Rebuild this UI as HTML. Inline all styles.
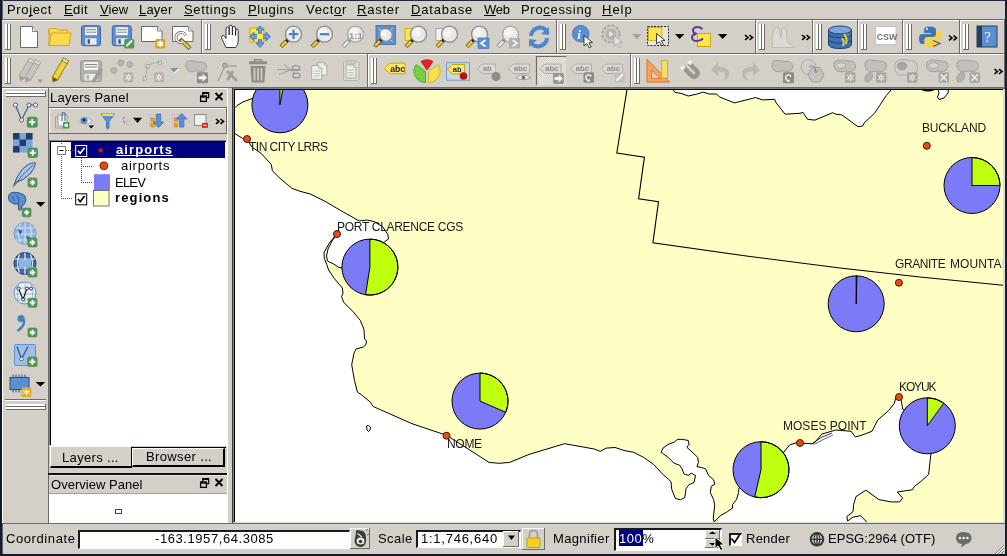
<!DOCTYPE html><html><head><meta charset="utf-8"><style>html,body{margin:0;padding:0;}body{width:1007px;height:556px;overflow:hidden;position:relative;background:#d4d0c8;font-family:"Liberation Sans", sans-serif;}div{box-sizing:border-box;} svg{display:block;overflow:hidden}u,span{text-decoration-skip-ink:none;}</style></head><body>
<svg style="position:absolute;left:235px;top:90px" width="768" height="432" viewBox="235 90 768 432"><rect x="230" y="85" width="780" height="445" fill="#fffec4"/><path d="M225.0,80.0 L266.0,80.0 L262.0,94.0 L252.0,98.5 L243.0,102.0 L237.0,105.5 L235.0,107.5 L225.0,112.0 Z" fill="#fff" stroke="#000" stroke-width="1" stroke-linejoin="round"/><path d="M225.0,133.6 L235.0,133.6 L242.4,138.3 L247.0,139.0 L251.7,147.0 L261.0,153.2 L271.3,164.6 L272.4,170.8 L279.6,178.0 L292.0,188.4 L300.0,191.3 L310.0,193.9 L325.2,201.4 L343.2,212.0 L350.8,216.2 L359.2,221.0 L366.8,220.0 L374.5,221.7 L382.8,227.0 L387.7,234.2 L388.5,239.0 L384.2,242.0 L370.0,255.0 L350.0,264.0 L342.0,268.0 L338.4,267.2 L333.0,263.5 L329.4,262.1 L327.5,261.0 L326.5,256.0 L328.0,249.0 L332.0,241.0 L337.0,234.0 L334.5,236.5 L329.0,243.5 L324.0,252.5 L324.3,258.5 L326.7,264.4 L328.6,270.0 L334.4,278.6 L342.3,288.0 L343.0,293.0 L341.6,296.6 L343.7,302.4 L353.1,311.7 L360.3,320.4 L363.9,329.0 L364.6,339.0 L366.5,341.0 L366.0,344.5 L363.2,347.0 L356.0,349.0 L354.0,353.2 L351.7,364.7 L354.5,380.6 L357.4,392.1 L361.7,395.0 L370.4,402.2 L373.2,406.5 L412.0,423.7 L446.6,435.3 L468.2,449.0 L489.0,462.4 L499.3,463.3 L509.7,462.4 L529.0,454.4 L564.6,443.7 L594.3,449.0 L600.2,451.4 L606.2,448.1 L615.0,447.5 L624.0,450.5 L633.6,452.3 L643.7,457.4 L653.8,464.6 L662.4,473.9 L668.2,479.0 L671.0,481.8 L671.8,489.7 L675.4,498.4 L680.4,499.8 L684.7,497.7 L686.2,488.3 L689.0,484.7 L694.0,482.6 L695.5,475.4 L691.2,473.2 L688.3,475.4 L684.0,473.9 L681.8,468.2 L679.7,465.3 L673.9,463.1 L668.2,457.4 L662.4,453.1 L661.0,452.3 L663.1,448.0 L668.2,444.4 L673.9,442.3 L677.5,439.4 L682.6,439.4 L688.3,440.5 L689.0,444.4 L686.9,447.3 L693.3,453.1 L697.7,457.4 L698.4,462.4 L697.0,466.7 L701.3,467.4 L705.6,468.9 L708.5,475.4 L713.7,479.9 L714.7,484.3 L711.3,486.3 L710.3,492.7 L713.7,499.7 L714.7,505.6 L713.2,518.5 L714.2,522.0 L714.2,535.0 L225.0,535.0 Z" fill="#fff" stroke="#000" stroke-width="1" stroke-linejoin="round"/><path d="M714.2,522.0 L720.7,515.5 L727.6,511.5 L732.5,508.1 L732.5,504.6 L736.5,499.7 L738.5,492.7 L739.0,487.8 L761.0,470.0 L784.0,452.0 L789.6,445.0 L796.3,442.7 L800.0,443.0 L813.5,443.9 L821.8,434.1 L835.8,430.0 L851.1,431.3 L855.3,436.9 L860.9,435.5 L872.0,431.3 L877.6,420.2 L888.8,410.4 L894.3,403.5 L895.7,397.9 L899.0,397.0 L901.3,400.7 L902.7,409.0 L927.0,426.0 L930.9,453.8 L928.6,474.4 L920.2,482.0 L914.1,486.6 L912.6,489.7 L897.3,492.0 L902.6,498.1 L899.6,501.9 L891.2,501.9 L878.9,499.6 L865.9,490.2 L856.0,496.6 L853.7,504.2 L852.9,511.9 L846.8,516.5 L847.6,521.0 L852.9,517.2 L860.6,515.7 L866.7,522.0 L866.7,535.0 L714.2,535.0 Z" fill="#fff" stroke="#000" stroke-width="1" stroke-linejoin="round"/><path d="M673.4,80.0 L673.4,90.0 L674.9,92.4 L680.9,93.3 L688.3,96.0 L697.2,94.0 L703.2,92.1 L709.2,94.0 L716.6,94.0 L719.6,97.0 L734.5,102.9 L752.3,98.4 L755.3,97.5 L762.8,99.9 L774.7,99.3 L776.2,102.9 L785.1,114.2 L800.0,113.3 L803.0,112.4 L807.5,119.3 L814.9,120.1 L832.8,112.7 L835.8,114.2 L841.7,114.8 L858.0,126.7 L862.6,126.1 L864.0,123.1 L874.5,113.3 L886.4,95.4 L890.9,90.0 L891.0,80.0 Z" fill="#fff" stroke="#000" stroke-width="1" stroke-linejoin="round"/><path d="M937.0,85.0 L949.0,85.0 L948.0,93.0 L944.0,98.0 L939.0,99.5 L937.5,97.0 L939.0,93.0 Z" fill="#fff" stroke="#000" stroke-width="1" stroke-linejoin="round"/><path d="M366.5,426.0 L368.5,425.5 L370.5,427.0 L370.0,430.0 L368.5,431.5 L367.0,430.0 Z" fill="#fff" stroke="#000" stroke-width="1" stroke-linejoin="round"/><path d="M922,89.5 Q928,92 934,89.5" fill="none" stroke="#000" stroke-width="1.5"/><path d="M813,443 L822,437 L832,433" fill="none" stroke="#000" stroke-width="0.8"/><path d="M815,444 L824,439 L833,435" fill="none" stroke="#000" stroke-width="0.6"/><path d="M626.9,85.0 L626.9,90.0 L616.8,153.0 L644.4,157.2 L638.6,198.8 L658.5,201.6 L652.9,242.9 L750.0,256.5 L840.0,268.0 L920.0,277.0 L1010.0,286.0" fill="none" stroke="#000" stroke-width="1.1"/><circle cx="279.9" cy="104.8" r="28" fill="#7b7bf7"/><path d="M279.9,104.8 L279.9,76.8 A28,28 0 0 1 285.24,77.31 Z" fill="#bfff0f" stroke="#000" stroke-width="1" stroke-linejoin="round"/><circle cx="279.9" cy="104.8" r="28" fill="none" stroke="#000" stroke-width="1"/><circle cx="369.9" cy="267.1" r="28" fill="#7b7bf7"/><path d="M369.9,267.1 L369.9,239.10000000000002 A28,28 0 1 1 365.52,294.76 Z" fill="#bfff0f" stroke="#000" stroke-width="1" stroke-linejoin="round"/><circle cx="369.9" cy="267.1" r="28" fill="none" stroke="#000" stroke-width="1"/><circle cx="480" cy="401.1" r="28" fill="#7b7bf7"/><path d="M480,401.1 L480,373.1 A28,28 0 0 1 505.66,412.31 Z" fill="#bfff0f" stroke="#000" stroke-width="1" stroke-linejoin="round"/><circle cx="480" cy="401.1" r="28" fill="none" stroke="#000" stroke-width="1"/><circle cx="972" cy="185.5" r="28" fill="#7b7bf7"/><path d="M972,185.5 L972,157.5 A28,28 0 0 1 1000.00,185.50 Z" fill="#bfff0f" stroke="#000" stroke-width="1" stroke-linejoin="round"/><circle cx="972" cy="185.5" r="28" fill="none" stroke="#000" stroke-width="1"/><circle cx="856.2" cy="303.8" r="28" fill="#7b7bf7"/><path d="M856.2,303.8 L856.2,275.8 A28,28 0 0 1 856.93,275.81 Z" fill="#bfff0f" stroke="#000" stroke-width="1" stroke-linejoin="round"/><circle cx="856.2" cy="303.8" r="28" fill="none" stroke="#000" stroke-width="1"/><circle cx="761" cy="469.7" r="28" fill="#7b7bf7"/><path d="M761,469.7 L761,441.7 A28,28 0 1 1 754.70,496.98 Z" fill="#bfff0f" stroke="#000" stroke-width="1" stroke-linejoin="round"/><circle cx="761" cy="469.7" r="28" fill="none" stroke="#000" stroke-width="1"/><circle cx="927.3" cy="425.8" r="28" fill="#7b7bf7"/><path d="M927.3,425.8 L927.3,397.8 A28,28 0 0 1 943.76,403.15 Z" fill="#bfff0f" stroke="#000" stroke-width="1" stroke-linejoin="round"/><circle cx="927.3" cy="425.8" r="28" fill="none" stroke="#000" stroke-width="1"/><circle cx="247" cy="139" r="3.5" fill="#f04b0c" stroke="#3a1a10" stroke-width="1"/><circle cx="337" cy="234" r="3.5" fill="#f04b0c" stroke="#3a1a10" stroke-width="1"/><circle cx="446.5" cy="435.7" r="3.5" fill="#f04b0c" stroke="#3a1a10" stroke-width="1"/><circle cx="926.8" cy="145.8" r="3.5" fill="#f04b0c" stroke="#3a1a10" stroke-width="1"/><circle cx="898.9" cy="282.8" r="3.5" fill="#f04b0c" stroke="#3a1a10" stroke-width="1"/><circle cx="800" cy="443" r="3.5" fill="#f04b0c" stroke="#3a1a10" stroke-width="1"/><circle cx="899" cy="397" r="3.5" fill="#f04b0c" stroke="#3a1a10" stroke-width="1"/></svg>
<div style="position:absolute;left:235px;top:90px;width:768px;height:432px;overflow:hidden">
<div style="position:absolute;left:14.40px;top:50.70px;font-size:12px;line-height:12px;color:#1a1a1a;letter-spacing:-0.517px;white-space:nowrap;will-change:transform">TIN CITY LRRS</div>
<div style="position:absolute;left:102.30px;top:131.40px;font-size:12px;line-height:12px;color:#1a1a1a;letter-spacing:-0.294px;white-space:nowrap;will-change:transform">PORT CLARENCE CGS</div>
<div style="position:absolute;left:211.90px;top:347.70px;font-size:12px;line-height:12px;color:#1a1a1a;letter-spacing:-0.300px;white-space:nowrap;will-change:transform">NOME</div>
<div style="position:absolute;left:686.80px;top:32.00px;font-size:12px;line-height:12px;color:#1a1a1a;letter-spacing:-0.186px;white-space:nowrap;will-change:transform">BUCKLAND</div>
<div style="position:absolute;left:659.70px;top:167.60px;font-size:12px;line-height:12px;color:#1a1a1a;letter-spacing:-0.433px;white-space:nowrap;will-change:transform">GRANITE</div>
<div style="position:absolute;left:714.90px;top:167.60px;font-size:12px;line-height:12px;color:#1a1a1a;letter-spacing:0.100px;white-space:nowrap;will-change:transform">MOUNTAIN</div>
<div style="position:absolute;left:547.60px;top:330.40px;font-size:12px;line-height:12px;color:#1a1a1a;letter-spacing:0.020px;white-space:nowrap;will-change:transform">MOSES POINT</div>
<div style="position:absolute;left:664.00px;top:290.70px;font-size:12px;line-height:12px;color:#1a1a1a;letter-spacing:-1.125px;white-space:nowrap;will-change:transform">KOYUK</div>
</div>
<div style="position:absolute;left:0px;top:0px;width:1007px;height:1px;background:#1f2940"></div>
<div style="position:absolute;left:0px;top:0px;width:2px;height:556px;background:#151a26"></div>
<div style="position:absolute;left:1.5px;top:0px;width:0.8px;height:556px;background:#56627a"></div>
<div style="position:absolute;left:1005px;top:0px;width:2px;height:556px;background:#1a2030"></div>
<div style="position:absolute;left:0px;top:554px;width:1007px;height:2px;background:#151a26"></div>
<div style="position:absolute;left:2px;top:19px;width:1003px;height:1px;background:#6e6b67"></div>
<div style="position:absolute;left:6.90px;top:3.00px;font-size:13px;line-height:13px;color:#000;font-weight:400;letter-spacing:0.650px;white-space:nowrap;will-change:transform;">Pro<u>j</u>ect</div>
<div style="position:absolute;left:63.50px;top:3.00px;font-size:13px;line-height:13px;color:#000;font-weight:400;letter-spacing:0.400px;white-space:nowrap;will-change:transform;"><u>E</u>dit</div>
<div style="position:absolute;left:99.50px;top:3.00px;font-size:13px;line-height:13px;color:#000;font-weight:400;letter-spacing:0.067px;white-space:nowrap;will-change:transform;"><u>V</u>iew</div>
<div style="position:absolute;left:138.80px;top:3.00px;font-size:13px;line-height:13px;color:#000;font-weight:400;letter-spacing:0.175px;white-space:nowrap;will-change:transform;"><u>L</u>ayer</div>
<div style="position:absolute;left:184.30px;top:3.00px;font-size:13px;line-height:13px;color:#000;font-weight:400;letter-spacing:0.686px;white-space:nowrap;will-change:transform;"><u>S</u>ettings</div>
<div style="position:absolute;left:247.80px;top:3.00px;font-size:13px;line-height:13px;color:#000;font-weight:400;letter-spacing:0.533px;white-space:nowrap;will-change:transform;"><u>P</u>lugins</div>
<div style="position:absolute;left:305.80px;top:3.00px;font-size:13px;line-height:13px;color:#000;font-weight:400;letter-spacing:0.700px;white-space:nowrap;will-change:transform;">Vect<u>o</u>r</div>
<div style="position:absolute;left:357.10px;top:3.00px;font-size:13px;line-height:13px;color:#000;font-weight:400;letter-spacing:0.780px;white-space:nowrap;will-change:transform;"><u>R</u>aster</div>
<div style="position:absolute;left:410.50px;top:3.00px;font-size:13px;line-height:13px;color:#000;font-weight:400;letter-spacing:0.814px;white-space:nowrap;will-change:transform;"><u>D</u>atabase</div>
<div style="position:absolute;left:484.00px;top:3.00px;font-size:13px;line-height:13px;color:#000;font-weight:400;letter-spacing:-0.300px;white-space:nowrap;will-change:transform;"><u>W</u>eb</div>
<div style="position:absolute;left:520.90px;top:3.00px;font-size:13px;line-height:13px;color:#000;font-weight:400;letter-spacing:0.689px;white-space:nowrap;will-change:transform;">Pro<u>c</u>essing</div>
<div style="position:absolute;left:601.90px;top:3.00px;font-size:13px;line-height:13px;color:#000;font-weight:400;letter-spacing:1.000px;white-space:nowrap;will-change:transform;"><u>H</u>elp</div>
<div style="position:absolute;left:2px;top:20px;width:200px;height:1px;background:#fff"></div>
<div style="position:absolute;left:2px;top:20px;width:1px;height:34px;background:#fff"></div>
<div style="position:absolute;left:2px;top:53px;width:200px;height:1px;background:#6e6b67"></div>
<div style="position:absolute;left:201px;top:20px;width:1px;height:34px;background:#6e6b67"></div>
<div style="position:absolute;left:5px;top:24px;width:2px;height:26px;background:#fff"></div>
<div style="position:absolute;left:7px;top:24px;width:1px;height:26px;background:#6e6b67"></div>
<div style="position:absolute;left:8px;top:24px;width:2px;height:26px;background:#fff"></div>
<div style="position:absolute;left:10px;top:24px;width:1px;height:26px;background:#6e6b67"></div>
<div style="position:absolute;left:5px;top:49px;width:6px;height:1px;background:#6e6b67"></div>
<div style="position:absolute;left:2px;top:21px;width:1px;height:32px;background:#d4d0c8"></div>
<div style="position:absolute;left:202px;top:20px;width:355px;height:1px;background:#fff"></div>
<div style="position:absolute;left:202px;top:20px;width:1px;height:34px;background:#fff"></div>
<div style="position:absolute;left:202px;top:53px;width:355px;height:1px;background:#6e6b67"></div>
<div style="position:absolute;left:556px;top:20px;width:1px;height:34px;background:#6e6b67"></div>
<div style="position:absolute;left:205px;top:24px;width:2px;height:26px;background:#fff"></div>
<div style="position:absolute;left:207px;top:24px;width:1px;height:26px;background:#6e6b67"></div>
<div style="position:absolute;left:208px;top:24px;width:2px;height:26px;background:#fff"></div>
<div style="position:absolute;left:210px;top:24px;width:1px;height:26px;background:#6e6b67"></div>
<div style="position:absolute;left:205px;top:49px;width:6px;height:1px;background:#6e6b67"></div>
<div style="position:absolute;left:557px;top:20px;width:199px;height:1px;background:#fff"></div>
<div style="position:absolute;left:557px;top:20px;width:1px;height:34px;background:#fff"></div>
<div style="position:absolute;left:557px;top:53px;width:199px;height:1px;background:#6e6b67"></div>
<div style="position:absolute;left:755px;top:20px;width:1px;height:34px;background:#6e6b67"></div>
<div style="position:absolute;left:560px;top:24px;width:2px;height:26px;background:#fff"></div>
<div style="position:absolute;left:562px;top:24px;width:1px;height:26px;background:#6e6b67"></div>
<div style="position:absolute;left:563px;top:24px;width:2px;height:26px;background:#fff"></div>
<div style="position:absolute;left:565px;top:24px;width:1px;height:26px;background:#6e6b67"></div>
<div style="position:absolute;left:560px;top:49px;width:6px;height:1px;background:#6e6b67"></div>
<div style="position:absolute;left:756px;top:20px;width:57px;height:1px;background:#fff"></div>
<div style="position:absolute;left:756px;top:20px;width:1px;height:34px;background:#fff"></div>
<div style="position:absolute;left:756px;top:53px;width:57px;height:1px;background:#6e6b67"></div>
<div style="position:absolute;left:812px;top:20px;width:1px;height:34px;background:#6e6b67"></div>
<div style="position:absolute;left:759px;top:24px;width:2px;height:26px;background:#fff"></div>
<div style="position:absolute;left:761px;top:24px;width:1px;height:26px;background:#6e6b67"></div>
<div style="position:absolute;left:762px;top:24px;width:2px;height:26px;background:#fff"></div>
<div style="position:absolute;left:764px;top:24px;width:1px;height:26px;background:#6e6b67"></div>
<div style="position:absolute;left:759px;top:49px;width:6px;height:1px;background:#6e6b67"></div>
<div style="position:absolute;left:813px;top:20px;width:45px;height:1px;background:#fff"></div>
<div style="position:absolute;left:813px;top:20px;width:1px;height:34px;background:#fff"></div>
<div style="position:absolute;left:813px;top:53px;width:45px;height:1px;background:#6e6b67"></div>
<div style="position:absolute;left:857px;top:20px;width:1px;height:34px;background:#6e6b67"></div>
<div style="position:absolute;left:816px;top:24px;width:2px;height:26px;background:#fff"></div>
<div style="position:absolute;left:818px;top:24px;width:1px;height:26px;background:#6e6b67"></div>
<div style="position:absolute;left:819px;top:24px;width:2px;height:26px;background:#fff"></div>
<div style="position:absolute;left:821px;top:24px;width:1px;height:26px;background:#6e6b67"></div>
<div style="position:absolute;left:816px;top:49px;width:6px;height:1px;background:#6e6b67"></div>
<div style="position:absolute;left:858px;top:20px;width:45px;height:1px;background:#fff"></div>
<div style="position:absolute;left:858px;top:20px;width:1px;height:34px;background:#fff"></div>
<div style="position:absolute;left:858px;top:53px;width:45px;height:1px;background:#6e6b67"></div>
<div style="position:absolute;left:902px;top:20px;width:1px;height:34px;background:#6e6b67"></div>
<div style="position:absolute;left:861px;top:24px;width:2px;height:26px;background:#fff"></div>
<div style="position:absolute;left:863px;top:24px;width:1px;height:26px;background:#6e6b67"></div>
<div style="position:absolute;left:864px;top:24px;width:2px;height:26px;background:#fff"></div>
<div style="position:absolute;left:866px;top:24px;width:1px;height:26px;background:#6e6b67"></div>
<div style="position:absolute;left:861px;top:49px;width:6px;height:1px;background:#6e6b67"></div>
<div style="position:absolute;left:903px;top:20px;width:57px;height:1px;background:#fff"></div>
<div style="position:absolute;left:903px;top:20px;width:1px;height:34px;background:#fff"></div>
<div style="position:absolute;left:903px;top:53px;width:57px;height:1px;background:#6e6b67"></div>
<div style="position:absolute;left:959px;top:20px;width:1px;height:34px;background:#6e6b67"></div>
<div style="position:absolute;left:906px;top:24px;width:2px;height:26px;background:#fff"></div>
<div style="position:absolute;left:908px;top:24px;width:1px;height:26px;background:#6e6b67"></div>
<div style="position:absolute;left:909px;top:24px;width:2px;height:26px;background:#fff"></div>
<div style="position:absolute;left:911px;top:24px;width:1px;height:26px;background:#6e6b67"></div>
<div style="position:absolute;left:906px;top:49px;width:6px;height:1px;background:#6e6b67"></div>
<div style="position:absolute;left:960px;top:20px;width:45px;height:1px;background:#fff"></div>
<div style="position:absolute;left:960px;top:20px;width:1px;height:34px;background:#fff"></div>
<div style="position:absolute;left:960px;top:53px;width:45px;height:1px;background:#6e6b67"></div>
<div style="position:absolute;left:1004px;top:20px;width:1px;height:34px;background:#6e6b67"></div>
<div style="position:absolute;left:963px;top:24px;width:2px;height:26px;background:#fff"></div>
<div style="position:absolute;left:965px;top:24px;width:1px;height:26px;background:#6e6b67"></div>
<div style="position:absolute;left:966px;top:24px;width:2px;height:26px;background:#fff"></div>
<div style="position:absolute;left:968px;top:24px;width:1px;height:26px;background:#6e6b67"></div>
<div style="position:absolute;left:963px;top:49px;width:6px;height:1px;background:#6e6b67"></div>
<div style="position:absolute;left:2px;top:54px;width:366px;height:1px;background:#fff"></div>
<div style="position:absolute;left:2px;top:54px;width:1px;height:34px;background:#fff"></div>
<div style="position:absolute;left:2px;top:87px;width:366px;height:1px;background:#6e6b67"></div>
<div style="position:absolute;left:367px;top:54px;width:1px;height:34px;background:#6e6b67"></div>
<div style="position:absolute;left:5px;top:58px;width:2px;height:26px;background:#fff"></div>
<div style="position:absolute;left:7px;top:58px;width:1px;height:26px;background:#6e6b67"></div>
<div style="position:absolute;left:8px;top:58px;width:2px;height:26px;background:#fff"></div>
<div style="position:absolute;left:10px;top:58px;width:1px;height:26px;background:#6e6b67"></div>
<div style="position:absolute;left:5px;top:83px;width:6px;height:1px;background:#6e6b67"></div>
<div style="position:absolute;left:2px;top:55px;width:1px;height:32px;background:#d4d0c8"></div>
<div style="position:absolute;left:368px;top:54px;width:263px;height:1px;background:#fff"></div>
<div style="position:absolute;left:368px;top:54px;width:1px;height:34px;background:#fff"></div>
<div style="position:absolute;left:368px;top:87px;width:263px;height:1px;background:#6e6b67"></div>
<div style="position:absolute;left:630px;top:54px;width:1px;height:34px;background:#6e6b67"></div>
<div style="position:absolute;left:371px;top:58px;width:2px;height:26px;background:#fff"></div>
<div style="position:absolute;left:373px;top:58px;width:1px;height:26px;background:#6e6b67"></div>
<div style="position:absolute;left:374px;top:58px;width:2px;height:26px;background:#fff"></div>
<div style="position:absolute;left:376px;top:58px;width:1px;height:26px;background:#6e6b67"></div>
<div style="position:absolute;left:371px;top:83px;width:6px;height:1px;background:#6e6b67"></div>
<div style="position:absolute;left:631px;top:54px;width:374px;height:1px;background:#fff"></div>
<div style="position:absolute;left:631px;top:54px;width:1px;height:34px;background:#fff"></div>
<div style="position:absolute;left:631px;top:87px;width:374px;height:1px;background:#6e6b67"></div>
<div style="position:absolute;left:1004px;top:54px;width:1px;height:34px;background:#6e6b67"></div>
<div style="position:absolute;left:634px;top:58px;width:2px;height:26px;background:#fff"></div>
<div style="position:absolute;left:636px;top:58px;width:1px;height:26px;background:#6e6b67"></div>
<div style="position:absolute;left:637px;top:58px;width:2px;height:26px;background:#fff"></div>
<div style="position:absolute;left:639px;top:58px;width:1px;height:26px;background:#6e6b67"></div>
<div style="position:absolute;left:634px;top:83px;width:6px;height:1px;background:#6e6b67"></div>
<div style="position:absolute;left:2px;top:88px;width:47px;height:1px;background:#fff"></div>
<div style="position:absolute;left:2px;top:88px;width:1px;height:436px;background:#fff"></div>
<div style="position:absolute;left:2px;top:523px;width:47px;height:1px;background:#6e6b67"></div>
<div style="position:absolute;left:48px;top:88px;width:1px;height:436px;background:#6e6b67"></div>
<div style="position:absolute;left:6px;top:91px;width:40px;height:2px;background:#fff"></div>
<div style="position:absolute;left:6px;top:93px;width:40px;height:1px;background:#6e6b67"></div>
<div style="position:absolute;left:6px;top:94px;width:40px;height:2px;background:#fff"></div>
<div style="position:absolute;left:6px;top:96px;width:40px;height:1px;background:#6e6b67"></div>
<div style="position:absolute;left:45px;top:91px;width:1px;height:6px;background:#6e6b67"></div>
<div style="position:absolute;left:5px;top:399px;width:41px;height:1px;background:#6e6b67"></div>
<div style="position:absolute;left:5px;top:400px;width:41px;height:1px;background:#fff"></div>
<div style="position:absolute;left:6px;top:404px;width:40px;height:2px;background:#fff"></div>
<div style="position:absolute;left:6px;top:406px;width:40px;height:1px;background:#6e6b67"></div>
<div style="position:absolute;left:6px;top:407px;width:40px;height:2px;background:#fff"></div>
<div style="position:absolute;left:6px;top:409px;width:40px;height:1px;background:#6e6b67"></div>
<div style="position:absolute;left:45px;top:404px;width:1px;height:6px;background:#6e6b67"></div>
<div style="position:absolute;left:49px;top:88px;width:178px;height:1px;background:#fff"></div>
<div style="position:absolute;left:50.20px;top:91.00px;font-size:13px;line-height:13px;color:#000;font-weight:400;letter-spacing:0.255px;white-space:nowrap;will-change:transform;">Layers Panel</div>
<div style="position:absolute;left:49px;top:107px;width:178px;height:1px;background:#6e6b67"></div>
<div style="position:absolute;left:49px;top:108px;width:178px;height:1px;background:#fff"></div>
<div style="position:absolute;left:49px;top:108px;width:1px;height:26px;background:#fff"></div>
<div style="position:absolute;left:49px;top:133px;width:178px;height:1px;background:#6e6b67"></div>
<div style="position:absolute;left:226px;top:108px;width:1px;height:26px;background:#6e6b67"></div>
<div style="position:absolute;left:49px;top:140px;width:178px;height:306px;background:#fff;border-top:1px solid #808080;border-left:1px solid #808080;border-right:1px solid #fff;border-bottom:1px solid #fff"></div>
<div style="position:absolute;left:50px;top:141px;width:176px;height:1px;background:#000"></div>
<div style="position:absolute;left:50px;top:141px;width:1px;height:304px;background:#000"></div>
<div style="position:absolute;left:71px;top:142px;width:154px;height:16px;background:#000080"></div>
<div style="position:absolute;left:50px;top:446px;width:82px;height:22px;background:#d4d0c8;border-top:1px solid #fff;border-left:1px solid #fff;border-bottom:2px solid #000;border-right:1px solid #6e6b67"></div>
<div style="position:absolute;left:131px;top:447px;width:95px;height:21px;border-top:1px solid #000;border-left:1px solid #000"></div>
<div style="position:absolute;left:132px;top:448px;width:93px;height:19px;background:#d4d0c8;border-top:1px solid #fff;border-left:1px solid #fff;border-right:2px solid #000;border-bottom:2px solid #000"></div>
<div style="position:absolute;left:62.20px;top:450.80px;font-size:13px;line-height:13px;color:#000;font-weight:400;letter-spacing:0.333px;white-space:nowrap;will-change:transform;">Layers ...</div>
<div style="position:absolute;left:146.30px;top:449.80px;font-size:13px;line-height:13px;color:#000;font-weight:400;letter-spacing:0.360px;white-space:nowrap;will-change:transform;">Browser ...</div>
<div style="position:absolute;left:48px;top:473px;width:180px;height:2px;background:#111"></div>
<div style="position:absolute;left:49px;top:475px;width:178px;height:1px;background:#e8e6e2"></div>
<div style="position:absolute;left:49px;top:493px;width:178px;height:1px;background:#a0a0a0"></div>
<div style="position:absolute;left:51.20px;top:477.50px;font-size:13px;line-height:13px;color:#000;font-weight:400;letter-spacing:0.023px;white-space:nowrap;will-change:transform;">Overview Panel</div>
<div style="position:absolute;left:49px;top:494px;width:178px;height:29px;background:#fff"></div>
<div style="position:absolute;left:114.5px;top:509px;width:7.5px;height:5px;border:1px solid #e00000"></div>
<div style="position:absolute;left:232px;top:88px;width:773px;height:436px;border-top:1px solid #3a3a3a;border-left:1px solid #3a3a3a"></div>
<div style="position:absolute;left:233px;top:88px;width:771px;height:1px;background:#808080"></div>
<div style="position:absolute;left:233px;top:88px;width:1px;height:434px;background:#808080"></div>
<div style="position:absolute;left:234px;top:89px;width:770px;height:1px;background:#000"></div>
<div style="position:absolute;left:234px;top:89px;width:1px;height:433px;background:#000"></div>
<div style="position:absolute;left:1003px;top:89px;width:2px;height:434px;background:#dcdcdc"></div>
<div style="position:absolute;left:234px;top:522px;width:771px;height:1px;background:#dcdcdc"></div>
<div style="position:absolute;left:227px;top:88px;width:1px;height:435px;background:#fff"></div>
<div style="position:absolute;left:2px;top:523px;width:1003px;height:1px;background:#6e6b67"></div>
<div style="position:absolute;left:5.70px;top:532.00px;font-size:13px;line-height:13px;color:#000;font-weight:400;letter-spacing:0.589px;white-space:nowrap;will-change:transform;">Coordinate</div>
<div style="position:absolute;left:78px;top:530px;width:272px;height:18.5px;background:#fff;border-top:2px solid #1a1a1a;border-left:2px solid #1a1a1a;border-right:1px solid #fff;border-bottom:1px solid #fff"></div>
<div style="position:absolute;left:154.90px;top:532.00px;font-size:13px;line-height:13px;color:#000;font-weight:400;letter-spacing:0.575px;white-space:nowrap;will-change:transform;">-163.1957,64.3085</div>
<div style="position:absolute;left:350px;top:528px;width:20px;height:1px;background:#fff"></div>
<div style="position:absolute;left:350px;top:528px;width:1px;height:21px;background:#fff"></div>
<div style="position:absolute;left:350px;top:548px;width:20px;height:1px;background:#6e6b67"></div>
<div style="position:absolute;left:369px;top:528px;width:1px;height:21px;background:#6e6b67"></div>
<div style="position:absolute;left:378.00px;top:532.00px;font-size:13px;line-height:13px;color:#000;font-weight:400;letter-spacing:0.425px;white-space:nowrap;will-change:transform;">Scale</div>
<div style="position:absolute;left:416px;top:530px;width:105px;height:18px;background:#fff;border-top:2px solid #1a1a1a;border-left:2px solid #1a1a1a;border-right:1px solid #fff;border-bottom:1px solid #fff"></div>
<div style="position:absolute;left:421.10px;top:532.00px;font-size:13px;line-height:13px;color:#000;font-weight:400;letter-spacing:0.750px;white-space:nowrap;will-change:transform;">1:1,746,640</div>
<div style="position:absolute;left:503px;top:531px;width:16px;height:16px;background:#d4d0c8"></div>
<div style="position:absolute;left:503px;top:531px;width:16px;height:1px;background:#fff"></div>
<div style="position:absolute;left:503px;top:531px;width:1px;height:16px;background:#fff"></div>
<div style="position:absolute;left:503px;top:546px;width:16px;height:1px;background:#6e6b67"></div>
<div style="position:absolute;left:518px;top:531px;width:1px;height:16px;background:#6e6b67"></div>
<div style="position:absolute;left:522px;top:528px;width:23px;height:1px;background:#fff"></div>
<div style="position:absolute;left:522px;top:528px;width:1px;height:22px;background:#fff"></div>
<div style="position:absolute;left:522px;top:549px;width:23px;height:1px;background:#6e6b67"></div>
<div style="position:absolute;left:544px;top:528px;width:1px;height:22px;background:#6e6b67"></div>
<div style="position:absolute;left:553.00px;top:532.00px;font-size:13px;line-height:13px;color:#000;font-weight:400;letter-spacing:0.350px;white-space:nowrap;will-change:transform;">Magnifier</div>
<div style="position:absolute;left:614px;top:527.5px;width:108px;height:23px;background:#fff;border-top:2px solid #1a1a1a;border-left:2px solid #1a1a1a;border-right:1px solid #fff;border-bottom:1px solid #fff"></div>
<div style="position:absolute;left:618.7px;top:530px;width:24px;height:16px;background:#000080"></div>
<div style="position:absolute;left:618.50px;top:532.00px;font-size:13px;line-height:13px;color:#000;font-weight:400;letter-spacing:0.500px;white-space:nowrap;will-change:transform;"><span style="color:#fff">100</span>%</div>
<div style="position:absolute;left:705px;top:530px;width:15px;height:18px;background:#d4d0c8"></div>
<div style="position:absolute;left:705px;top:530px;width:15px;height:1px;background:#fff"></div>
<div style="position:absolute;left:705px;top:530px;width:1px;height:9px;background:#fff"></div>
<div style="position:absolute;left:705px;top:538px;width:15px;height:1px;background:#6e6b67"></div>
<div style="position:absolute;left:719px;top:530px;width:1px;height:9px;background:#6e6b67"></div>
<div style="position:absolute;left:705px;top:539px;width:15px;height:1px;background:#fff"></div>
<div style="position:absolute;left:705px;top:539px;width:1px;height:9px;background:#fff"></div>
<div style="position:absolute;left:705px;top:547px;width:15px;height:1px;background:#6e6b67"></div>
<div style="position:absolute;left:719px;top:539px;width:1px;height:9px;background:#6e6b67"></div>
<div style="position:absolute;left:729px;top:533px;width:13px;height:13px;background:#fff;border-top:2px solid #1a1a1a;border-left:2px solid #1a1a1a;border-right:1px solid #fff;border-bottom:1px solid #fff"></div>
<div style="position:absolute;left:745.80px;top:532.00px;font-size:13px;line-height:13px;color:#000;font-weight:400;letter-spacing:0.240px;white-space:nowrap;will-change:transform;">Render</div>
<div style="position:absolute;left:828.00px;top:532.00px;font-size:13px;line-height:13px;color:#000;font-weight:400;letter-spacing:0.029px;white-space:nowrap;will-change:transform;">EPSG:2964 (OTF)</div>
<svg style="position:absolute;left:0;top:0" width="1007" height="556" viewBox="0 0 1007 556"><g transform="translate(0,0) scale(1)"><path d="M20.5,26.5 H32.5 L37.5,31.5 V47.5 H20.5 Z" fill="#fff" stroke="#6a6a6a" stroke-width="1" stroke-linejoin="round"/><path d="M32.5,26.5 V31.5 H37.5" fill="#e8e8e8" stroke="#6a6a6a" stroke-width="0.8"/></g><g transform="translate(0,0) scale(1)"><path d="M49,28.5 H56 L57.5,30 H68 V35 H49 Z" fill="#fcd84c" stroke="#c9a41a" stroke-width="0.9"/><path d="M51.5,33 H71 L69,45.5 H49 Z" fill="#fdd94e" stroke="#c9a41a" stroke-width="0.9"/><path d="M49,30 V45.5" stroke="#c9a41a" stroke-width="0.9"/></g><g transform="translate(0,0) scale(1)"><rect x="81.5" y="25.7" width="19" height="20" rx="2" fill="#5b8fd1" stroke="#3767a8" stroke-width="1"/><rect x="85" y="27.2" width="12" height="8" fill="#f2f2f2"/><path d="M86,29.7 H96 M86,32.2 H96" stroke="#7a7a7a" stroke-width="0.9"/><rect x="85.5" y="38.2" width="11" height="6.5" fill="#ececec"/><rect x="87.5" y="39.2" width="2.5" height="4.5" fill="#2f5d9c"/></g><g transform="translate(0,0) scale(1)"><rect x="112.3" y="25.7" width="19" height="20" rx="2" fill="#5b8fd1" stroke="#3767a8" stroke-width="1"/><rect x="115.8" y="27.2" width="12" height="8" fill="#f2f2f2"/><path d="M116.8,29.7 H126.80000000000001 M116.8,32.2 H126.80000000000001" stroke="#7a7a7a" stroke-width="0.9"/><rect x="116.3" y="38.2" width="11" height="6.5" fill="#ececec"/><rect x="118.3" y="39.2" width="2.5" height="4.5" fill="#2f5d9c"/><rect x="124.2" y="39" width="10" height="9.5" rx="1.5" fill="#4f9a55"/><path d="M126.5,46 L132,40.5" stroke="#fff" stroke-width="1.8"/></g><g transform="translate(0,0) scale(1)"><path d="M141.5,26.5 H157.5 L162.0,31 V41.5 H141.5 Z" fill="#fff" stroke="#6a6a6a" stroke-width="1" stroke-linejoin="round"/><path d="M157.5,26.5 V31 H162.0" fill="#e8e8e8" stroke="#6a6a6a" stroke-width="0.8"/><rect x="155.3" y="39" width="10" height="9.5" rx="1.5" fill="#d4a81c"/><circle cx="160.3" cy="43.7" r="2.6" fill="#fff2a0"/><path d="M160.3,40.2 V47.2 M157,42 L163.6,45.5 M157,45.5 L163.6,42" stroke="#fff" stroke-width="0.9"/></g><g transform="translate(0,0) scale(1)"><path d="M172.5,26.5 H188.5 L193.0,31 V41.5 H172.5 Z" fill="#fff" stroke="#6a6a6a" stroke-width="1" stroke-linejoin="round"/><path d="M188.5,26.5 V31 H193.0" fill="#e8e8e8" stroke="#6a6a6a" stroke-width="0.8"/><path d="M180,39 L190,48.5" stroke="#5a5a3a" stroke-width="4"/><path d="M181,40 L189.5,48" stroke="#f0d040" stroke-width="2.4"/><path d="M183,42 A5,5 0 1 1 185.5,35.5" fill="none" stroke="#555" stroke-width="2.8"/><path d="M183,42 A5,5 0 1 1 185.5,35.5" fill="none" stroke="#fafafa" stroke-width="1.5"/></g><g transform="translate(0,0) scale(1)"><path d="M226,47.5 L222.5,40 Q220.5,36 222.8,35.5 Q224.5,35.3 226,38.5 V29 Q226,27 227.6,27 Q229.2,27 229.2,29 V35 V26.8 Q229.2,25.2 230.8,25.2 Q232.4,25.2 232.4,26.8 V35 V28 Q232.4,26.5 234,26.5 Q235.6,26.5 235.6,28 V35.5 V30.5 Q235.6,29 236.9,29 Q238.2,29 238.2,30.5 V41 Q238.2,45 235.5,47.5 Z" fill="#fff" stroke="#222" stroke-width="0.9" stroke-linejoin="round"/></g><g transform="translate(0,0) scale(1)"><rect x="250" y="28" width="14" height="14" fill="#fce44c" stroke="#c8a400" stroke-width="0.9"/><path d="M260,26 L264,30 H261.5 V34.5 H266 V32 L270.5,36.5 L266,41 V38.5 H261.5 V43 H264 L260,47.5 L256,43 H258.5 V38.5 H254 V41 L249.5,36.5 L254,32 V34.5 H258.5 V30 H256 Z" fill="#6a9ad6" stroke="#3e6fae" stroke-width="0.8" stroke-linejoin="round"/><rect x="257" y="34" width="6" height="5" fill="#fce44c"/></g><g transform="translate(0,0) scale(1)"><path d="M287.5,40.2 L281.0,46.7" stroke="#6d5a10" stroke-width="4" stroke-linecap="butt"/><path d="M286.3,41.4 L281.5,46.2" stroke="#f5d52e" stroke-width="2.3"/><circle cx="287.5" cy="40.2" r="1.6" fill="#111"/><circle cx="293.5" cy="34.2" r="8" fill="#e9e9e7" stroke="#8c8c8c" stroke-width="1.3"/><circle cx="291.5" cy="32.2" r="4.4" fill="#f8f8f8" opacity="0.8"/><path d="M293.5,29.5 V39 M288.8,34.2 H298.2" stroke="#4a7fc4" stroke-width="2.2"/></g><g transform="translate(0,0) scale(1)"><path d="M318.5,40.2 L312.0,46.7" stroke="#6d5a10" stroke-width="4" stroke-linecap="butt"/><path d="M317.3,41.4 L312.5,46.2" stroke="#f5d52e" stroke-width="2.3"/><circle cx="318.5" cy="40.2" r="1.6" fill="#111"/><circle cx="324.5" cy="34.2" r="8" fill="#e9e9e7" stroke="#8c8c8c" stroke-width="1.3"/><circle cx="322.5" cy="32.2" r="4.4" fill="#f8f8f8" opacity="0.8"/><path d="M319.8,34.2 H329.2" stroke="#4a7fc4" stroke-width="2.2"/></g><g transform="translate(0,0) scale(1)"><path d="M349.5,40.2 L343.0,46.7" stroke="#8a8a8a" stroke-width="4" stroke-linecap="butt"/><path d="M348.3,41.4 L343.5,46.2" stroke="#f0f0f0" stroke-width="2.3"/><circle cx="355.5" cy="34.2" r="8" fill="#e9e9e7" stroke="#a8a6a2" stroke-width="1.3"/><circle cx="353.5" cy="32.2" r="4.4" fill="#f8f8f8" opacity="0.8"/><text x="349" y="38.5" font-family="Liberation Sans" font-weight="bold" font-size="9.5" fill="#9a9894">1:1</text></g><g transform="translate(0,0) scale(1)"><rect x="376" y="25.5" width="19.5" height="19" fill="#5b8fd1" stroke="#3d6cab" stroke-width="0.8"/><path d="M379,28.5 L384,33.5 M392.5,28.5 L387.5,33.5 M392.5,41.5 L387.5,36.5" stroke="#eef3fa" stroke-width="1"/><path d="M381.2,39.8 L374.7,46.3" stroke="#6d5a10" stroke-width="4" stroke-linecap="butt"/><path d="M380.0,41.0 L375.2,45.8" stroke="#f5d52e" stroke-width="2.3"/><circle cx="381.2" cy="39.8" r="1.6" fill="#111"/><circle cx="386" cy="35" r="6.3" fill="#e9e9e7" stroke="#8c8c8c" stroke-width="1.3"/><circle cx="384" cy="33" r="3.4650000000000003" fill="#f8f8f8" opacity="0.8"/></g><g transform="translate(0,0) scale(1)"><rect x="405" y="28.5" width="8" height="12" fill="#fce44c" stroke="#c9a400" stroke-width="0.8"/><path d="M412.5,40.2 L406.0,46.7" stroke="#6d5a10" stroke-width="4" stroke-linecap="butt"/><path d="M411.3,41.4 L406.5,46.2" stroke="#f5d52e" stroke-width="2.3"/><circle cx="412.5" cy="40.2" r="1.6" fill="#111"/><circle cx="418.5" cy="34.2" r="8" fill="#e9e9e7" stroke="#8c8c8c" stroke-width="1.3"/><circle cx="416.5" cy="32.2" r="4.4" fill="#f8f8f8" opacity="0.8"/></g><g transform="translate(0,0) scale(1)"><rect x="436" y="28.5" width="8" height="12" fill="#f4f4f4" stroke="#9a9a9a" stroke-width="0.8"/><path d="M443.5,40.2 L437.0,46.7" stroke="#6d5a10" stroke-width="4" stroke-linecap="butt"/><path d="M442.3,41.4 L437.5,46.2" stroke="#f5d52e" stroke-width="2.3"/><circle cx="443.5" cy="40.2" r="1.6" fill="#111"/><circle cx="449.5" cy="34.2" r="8" fill="#e9e9e7" stroke="#8c8c8c" stroke-width="1.3"/><circle cx="447.5" cy="32.2" r="4.4" fill="#f8f8f8" opacity="0.8"/></g><g transform="translate(0,0) scale(1)"><path d="M473.5,40.2 L467.0,46.7" stroke="#6d5a10" stroke-width="4" stroke-linecap="butt"/><path d="M472.3,41.4 L467.5,46.2" stroke="#f5d52e" stroke-width="2.3"/><circle cx="473.5" cy="40.2" r="1.6" fill="#111"/><circle cx="479.5" cy="34.2" r="8" fill="#e9e9e7" stroke="#8c8c8c" stroke-width="1.3"/><circle cx="477.5" cy="32.2" r="4.4" fill="#f8f8f8" opacity="0.8"/><rect x="478" y="38" width="11" height="10.5" fill="#5b8fd1" stroke="#3d6cab" stroke-width="0.6"/><path d="M485.5,40 L481,43.2 L485.5,46.5" fill="none" stroke="#fff" stroke-width="1.8"/></g><g transform="translate(0,0) scale(1)"><path d="M504.5,40.2 L498.0,46.7" stroke="#8a8a8a" stroke-width="4" stroke-linecap="butt"/><path d="M503.3,41.4 L498.5,46.2" stroke="#f0f0f0" stroke-width="2.3"/><circle cx="510.5" cy="34.2" r="8" fill="#e9e9e7" stroke="#a8a6a2" stroke-width="1.3"/><circle cx="508.5" cy="32.2" r="4.4" fill="#f8f8f8" opacity="0.8"/><rect x="509" y="38" width="11" height="10.5" fill="#b3b0ab"/><path d="M512.5,40 L517,43.2 L512.5,46.5" fill="none" stroke="#f2f2f2" stroke-width="1.8"/></g><g transform="translate(0,0) scale(1)"><path d="M531,36 A9,9 0 0 1 546,30" fill="none" stroke="#4f86cc" stroke-width="4"/><path d="M549,27 L549,35 L541,34 Z" fill="#4f86cc"/><path d="M547,38 A9,9 0 0 1 532,44" fill="none" stroke="#4f86cc" stroke-width="4"/><path d="M529,47 L529,39 L537,40 Z" fill="#4f86cc"/></g><g transform="translate(0,0) scale(1)"><circle cx="580.7" cy="33.7" r="8.3" fill="#5b8fd1" stroke="#3d6cab" stroke-width="0.8"/><text x="577.5" y="38.5" font-family="Liberation Serif" font-style="italic" font-weight="bold" font-size="12" fill="#fff">i</text><path transform="translate(584,35.5) scale(0.95)" d="M0,0 L0,11 L3,8.5 L5.5,13 L7.5,12 L5.2,7.6 L9,7.4 Z" fill="#fff" stroke="#222" stroke-width="0.9" stroke-linejoin="round"/></g><g transform="translate(0,0) scale(1)"><circle cx="611" cy="34" r="8.5" fill="#cfccc6" stroke="#a9a6a1" stroke-width="2" stroke-dasharray="3 1.5"/><circle cx="611" cy="34" r="5.5" fill="#b5b2ad"/><path d="M609,31 L614,34 L609,37 Z" fill="#e8e6e2"/><path transform="translate(614,35.5) scale(0.95)" d="M0,0 L0,11 L3,8.5 L5.5,13 L7.5,12 L5.2,7.6 L9,7.4 Z" fill="#e4e2de" stroke="#a9a6a1" stroke-width="0.9" stroke-linejoin="round"/><path d="M632,34 H641.3 L636.65,39 Z" fill="#a4a19c"/></g><g transform="translate(0,0) scale(1)"><rect x="647.5" y="26.5" width="21" height="19" fill="#e6e6e6" stroke="#222" stroke-width="1" stroke-dasharray="2 1.3"/><rect x="648.5" y="27.5" width="13.5" height="13" fill="#fce44c" stroke="#c9a400" stroke-width="0.8"/><path transform="translate(656.5,33.5) scale(0.95)" d="M0,0 L0,11 L3,8.5 L5.5,13 L7.5,12 L5.2,7.6 L9,7.4 Z" fill="#fff" stroke="#222" stroke-width="0.9" stroke-linejoin="round"/><path d="M675,34.1 H684.3 L679.65,39.1 Z" fill="#000"/></g><g transform="translate(0,0) scale(1)"><rect x="697.5" y="33.5" width="13" height="13" fill="#fce44c" stroke="#c9a400" stroke-width="0.9"/><path d="M702.5,29 Q700,26.8 697,27 Q693,27.5 693,30.5 Q693,33 696.5,33.8 Q692,34.5 692,37.5 Q692.3,41 697,41 Q700.5,41 703,38.5" fill="none" stroke="#5c3a8c" stroke-width="2"/><path d="M718,34.1 H727.3 L722.65,39.1 Z" fill="#000"/></g><g transform="translate(0,0) scale(1)"><path d="M745,35.1 L748,37.5 L745,39.9" fill="none" stroke="#000" stroke-width="1.6"/><path d="M749.5,35.1 L752.5,37.5 L749.5,39.9" fill="none" stroke="#000" stroke-width="1.6"/></g><g transform="translate(0,0) scale(1)"><path d="M772,47.5 L773,33 Q775,26 777.5,27 Q779.5,28.5 780,34 L781,38 L782,28.5 Q784,26 786,29 L787.5,42 L795,47.5 Z" fill="#dddad5" stroke="#b5b2ad" stroke-width="0.8"/></g><g transform="translate(0,0) scale(1)"><path d="M802,35.1 L805,37.5 L802,39.9" fill="none" stroke="#000" stroke-width="1.6"/><path d="M806.5,35.1 L809.5,37.5 L806.5,39.9" fill="none" stroke="#000" stroke-width="1.6"/></g><g transform="translate(0,0) scale(1)"><path d="M828.5,30 V44 Q828.5,48.5 840,48.5 Q851.5,48.5 851.5,44 V30 Z" fill="#3f72b5" stroke="#1e3f70" stroke-width="1"/><ellipse cx="840" cy="30" rx="11.5" ry="4" fill="#7aa6dc" stroke="#1e3f70" stroke-width="1"/><path d="M828.5,35.5 Q840,40 851.5,35.5 M828.5,41 Q840,45.5 851.5,41" fill="none" stroke="#1e3f70" stroke-width="1"/><path d="M844,34 Q848,38 846,44 M842,38 Q845,42 843,46" fill="none" stroke="#e8d040" stroke-width="2"/><path d="M847,33 L849,36" stroke="#58a030" stroke-width="1.5"/></g><g transform="translate(0,0) scale(1)"><rect x="874" y="35" width="6" height="11" fill="#cfcdc9"/><rect x="875.5" y="26.5" width="20.5" height="18" fill="#fff" stroke="#bdbab6" stroke-width="0.8"/><text x="876.7" y="39.5" font-family="Liberation Sans" font-size="8.8" font-weight="bold" fill="#77736e">CSW</text></g><g transform="translate(0,0) scale(1)"><path d="M929.5,26.5 Q924,26.5 924,30 V33 H931 V34 H922 Q919,34 919,39 Q919,44 922,44 H924.5 V40.5 Q924.5,37.5 927.5,37.5 H933 Q936,37.5 936,34.5 V30 Q936,26.5 929.5,26.5 Z" fill="#3f75b0"/><path d="M931,48 Q936.5,48 936.5,44.5 V41.5 H929.5 V40.5 H938.5 Q941.5,40.5 941.5,35.5 Q941.5,30.5 938.5,30.5 H936 V34 Q936,37 933,37 H927.5 Q924.5,37 924.5,40 V44.5 Q924.5,48 931,48 Z" fill="#f6d44a"/><circle cx="927" cy="29" r="0.9" fill="#fff"/><path d="M933,40.5 L940,43.5 L933,46.5" fill="none" stroke="#555" stroke-width="1.2"/></g><g transform="translate(0,0) scale(1)"><path d="M949,35.5 L952,37.9 L949,40.3" fill="none" stroke="#000" stroke-width="1.6"/><path d="M953.5,35.5 L956.5,37.9 L953.5,40.3" fill="none" stroke="#000" stroke-width="1.6"/></g><g transform="translate(0,0) scale(1)"><rect x="977" y="26" width="20" height="21" fill="#5b8fd1" stroke="#2c3e58" stroke-width="1"/><rect x="977" y="26" width="5" height="21" fill="#2c3e58"/><text x="984.5" y="41.5" font-family="Liberation Serif" font-size="14" fill="#fff">?</text></g><g transform="translate(0,0) scale(1)"><g transform="translate(20,80.5) rotate(-60)"><rect x="4" y="-3" width="18" height="6" fill="#c9c6c1" stroke="#a5a29d" stroke-width="0.9"/><rect x="21" y="-3" width="3" height="6" fill="#ddd" stroke="#a5a29d" stroke-width="0.9"/><path d="M4,-3 L0,0 L4,3 Z" fill="#a5a29d" stroke="#a5a29d" stroke-width="0.7"/></g><g transform="translate(26,82) rotate(-60)"><rect x="4" y="-3" width="18" height="6" fill="#c9c6c1" stroke="#a5a29d" stroke-width="0.9"/><rect x="21" y="-3" width="3" height="6" fill="#ddd" stroke="#a5a29d" stroke-width="0.9"/><path d="M4,-3 L0,0 L4,3 Z" fill="#a5a29d" stroke="#a5a29d" stroke-width="0.7"/></g><path d="M37.5,79.5 H43 L40,83 Z" fill="#9f9c97"/></g><g transform="translate(0,0) scale(1)"><g transform="translate(53,82) rotate(-60)"><rect x="4" y="-3" width="20" height="6" fill="#f2d43a" stroke="#8f7a10" stroke-width="0.9"/><rect x="23" y="-3" width="3" height="6" fill="#e8e8e8" stroke="#8f7a10" stroke-width="0.9"/><path d="M4,-3 L0,0 L4,3 Z" fill="#555" stroke="#8f7a10" stroke-width="0.7"/></g></g><g transform="translate(0,0) scale(1)"><rect x="80.5" y="60.5" width="21" height="21" rx="2" fill="#b3b0ab" stroke="#9e9b96" stroke-width="1"/><rect x="84" y="62" width="14" height="8" fill="#f2f2f2"/><path d="M85,64.5 H97 M85,67 H97" stroke="#7a7a7a" stroke-width="0.9"/><rect x="84.5" y="74" width="13" height="6.5" fill="#ececec"/><rect x="86.5" y="75" width="2.5" height="4.5" fill="#b3b0ab"/><path d="M93,82 L101.5,69" stroke="#a09d98" stroke-width="3.5"/></g><g transform="translate(0,0) scale(1)"><circle cx="113.9" cy="70.5" r="2.8" fill="#bab7b2" stroke="#9a9792" stroke-width="0.8"/><circle cx="120.9" cy="62.8" r="2.8" fill="#bab7b2" stroke="#9a9792" stroke-width="0.8"/><circle cx="129.8" cy="64.6" r="2.8" fill="#bab7b2" stroke="#9a9792" stroke-width="0.8"/><rect x="123.4" y="72.3" width="10" height="10" rx="1.5" fill="#b5b2ad"/><path d="M128.4,73.8 V80.8 M125.2,75.1 L131.6,79.5 M125.2,79.5 L131.6,75.1" stroke="#f4f2ee" stroke-width="1"/><circle cx="128.4" cy="77.3" r="2" fill="#f4f2ee"/><circle cx="128.4" cy="77.3" r="1" fill="#b5b2ad"/></g><g transform="translate(0,0) scale(1)"><path d="M145,79 L147.5,66.5 Q152,62 159.5,62.5" fill="none" stroke="#aaa7a2" stroke-width="1"/><rect x="143" y="77" width="3.2" height="3.2" fill="#dedbd6" stroke="#9a9792" stroke-width="0.7"/><rect x="146" y="64.5" width="3.2" height="3.2" fill="#dedbd6" stroke="#9a9792" stroke-width="0.7"/><rect x="158.5" y="61" width="3.2" height="3.2" fill="#dedbd6" stroke="#9a9792" stroke-width="0.7"/><rect x="154" y="72.3" width="10" height="10" rx="1.5" fill="#b5b2ad"/><path d="M159.0,73.8 V80.8 M155.8,75.1 L162.2,79.5 M155.8,79.5 L162.2,75.1" stroke="#f4f2ee" stroke-width="1"/><circle cx="159.0" cy="77.3" r="2" fill="#f4f2ee"/><circle cx="159.0" cy="77.3" r="1" fill="#b5b2ad"/><path d="M170.2,68 H179.5 L174.8,73.6 Z" fill="#8a93a8"/><path d="M174,73 L179,69" stroke="#fff" stroke-width="1.2"/></g><g transform="translate(0,0) scale(1)"><path d="M186,66 Q185,60.5 191,60.8 Q196,61.5 200,62 Q206,61.5 206.5,66 Q207,71 201,71.5 Q196,70 193,71.8 Q186.5,72.5 186,66 Z" fill="#c3c0bb" stroke="#9f9c97" stroke-width="0.9"/><rect x="197" y="72.3" width="11" height="11" rx="1.5" fill="#8f8c88"/><path d="M198.5,76.3 H202.5 V73.8 L207,77.8 L202.5,81.8 V79.3 H198.5 Z" fill="#f4f2ee"/></g><g transform="translate(0,0) scale(1)"><path d="M218,81 L225,66 M225,66 H237" stroke="#8f8c88" stroke-width="0.9"/><circle cx="225" cy="65.5" r="2.5" fill="#b3b0ab" stroke="#8f8c88" stroke-width="0.8"/><path d="M227,71 L237,81 M233,71 L227.5,80" stroke="#a3a09b" stroke-width="3"/></g><g transform="translate(0,0) scale(1)"><path d="M254.5,61.5 V59.8 H261.5 V61.5" fill="none" stroke="#8f8c88" stroke-width="1.6"/><rect x="249" y="61.3" width="18" height="3" rx="1" fill="#8f8c88"/><path d="M250.5,66 H265.5 L264.5,82.5 H251.5 Z" fill="#8f8c88"/><path d="M254.5,68 V80.5 M258,68 V80.5 M261.5,68 V80.5" stroke="#cfccc6" stroke-width="1.8"/></g><g transform="translate(0,0) scale(1)"><path d="M277,69.5 L301,70 M279,74.5 L293,69 M284,64 L294,73" stroke="#9a9792" stroke-width="0.9"/><ellipse cx="296" cy="68" rx="3.5" ry="2.5" fill="none" stroke="#8a8a90" stroke-width="1.2"/><ellipse cx="296.5" cy="75.5" rx="3.5" ry="2.5" fill="none" stroke="#8a8a90" stroke-width="1.2"/></g><g transform="translate(0,0) scale(1)"><path d="M317.5,62.7 H324.5 L327.0,65.2 V75.2 H317.5 Z" fill="#eeece8" stroke="#aeaba6" stroke-width="1" stroke-linejoin="round"/><path d="M324.5,62.7 V65.2 H327.0" fill="#e8e8e8" stroke="#aeaba6" stroke-width="0.8"/><path d="M311.7,65.5 H318.7 L321.7,68.5 V79.3 H311.7 Z" fill="#f2f0ec" stroke="#aeaba6" stroke-width="1" stroke-linejoin="round"/><path d="M318.7,65.5 V68.5 H321.7" fill="#e8e8e8" stroke="#aeaba6" stroke-width="0.8"/><path d="M313.5,71 H320 M313.5,73.5 H320 M313.5,76 H320" stroke="#aeaba6" stroke-width="0.7"/></g><g transform="translate(0,0) scale(1)"><rect x="343.5" y="62" width="15.5" height="18.5" rx="1.5" fill="#dedbd6" stroke="#b2afaa" stroke-width="0.9"/><rect x="347" y="60.6" width="8" height="3.5" fill="#cfccc7" stroke="#b2afaa" stroke-width="0.7"/><path d="M346.0,65.0 H353.5 L356.0,67.5 V78.0 H346.0 Z" fill="#f0eee9" stroke="#aeaba6" stroke-width="1" stroke-linejoin="round"/><path d="M353.5,65.0 V67.5 H356.0" fill="#e8e8e8" stroke="#aeaba6" stroke-width="0.8"/><path d="M347.5,70 H354 M347.5,72.5 H354 M347.5,75 H354" stroke="#aeaba6" stroke-width="0.7"/></g><g transform="translate(0,0) scale(1)"><path d="M384.5,68.45 L389.75,63.2 H405.0 V73.7 H389.75 Z" fill="#fce66a" stroke="#c8a800" stroke-width="1"/><text x="390.25" y="71.5" font-family="Liberation Sans" font-weight="bold" font-size="8.6" fill="#222">abc</text></g><g transform="translate(0,0) scale(1)"><path d="M427,70 L421,61.5 A11.5,11.5 0 0 1 433,61.5 Z" fill="#e8202a" stroke="#c01010" stroke-width="0.8"/><path d="M425.5,71.5 L425.5,82.5 A11.5,11.5 0 0 1 416,64.5 Z" fill="#78d040" stroke="#3e9a20" stroke-width="0.8"/><path d="M428.5,71.5 L438,64.5 A11.5,11.5 0 0 1 428.5,82.5 Z" fill="#f7e04a" stroke="#c9aa10" stroke-width="0.8"/></g><g transform="translate(0,0) scale(1)"><rect x="446.5" y="62.7" width="23" height="17.5" fill="#cdd8e6" stroke="#6f9ad0" stroke-width="1"/><path d="M447.5,69.25 L452.25,64.5 H464.5 V74.0 H452.25 Z" fill="#fce66a" stroke="#c8a800" stroke-width="1"/><text x="452.75" y="71.8" font-family="Liberation Sans" font-weight="bold" font-size="7.6" fill="#222">ab</text><circle cx="463.5" cy="76" r="3.8" fill="#b01818"/><path d="M462,71.5 V66" stroke="#ddd" stroke-width="1.8"/></g><g transform="translate(0,0) scale(1)"><path d="M477.5,68.75 L482.25,64 H495.5 V73.5 H482.25 Z" fill="#dcd9d4" stroke="#aeaba6" stroke-width="1"/><text x="482.75" y="71.3" font-family="Liberation Sans" font-weight="bold" font-size="7.8" fill="#8f8c88">ab</text><circle cx="496" cy="76.5" r="4.5" fill="#8f8c88"/><path d="M494.5,72 V67" stroke="#ddd" stroke-width="1.8"/></g><g transform="translate(0,0) scale(1)"><path d="M508.5,68.75 L513.25,64 H529.5 V73.5 H513.25 Z" fill="#dcd9d4" stroke="#aeaba6" stroke-width="1"/><text x="513.75" y="71.3" font-family="Liberation Sans" font-weight="bold" font-size="7.8" fill="#8f8c88">abc</text><path d="M516,77.5 Q523,72.5 531,77.5 Q523,82 516,77.5 Z" fill="#eeece8" stroke="#8f8c88" stroke-width="0.8"/><circle cx="523.5" cy="77.5" r="1.8" fill="#666"/></g><g transform="translate(0,0) scale(1)"><defs><pattern id="chk" width="2" height="2" patternUnits="userSpaceOnUse"><rect width="2" height="2" fill="#ebe9e5"/><rect width="1" height="1" fill="#d4d0c8"/><rect x="1" y="1" width="1" height="1" fill="#d4d0c8"/></pattern></defs><rect x="536" y="56" width="30" height="29" fill="url(#chk)"/><path d="M536.5,85 V56.5 H566" fill="none" stroke="#6e6b67" stroke-width="1.2"/><path d="M540,68.75 L544.75,64 H561 V73.5 H544.75 Z" fill="#dcd9d4" stroke="#aeaba6" stroke-width="1"/><text x="545.25" y="71.3" font-family="Liberation Sans" font-weight="bold" font-size="7.8" fill="#8f8c88">abc</text><rect x="553" y="73" width="11" height="11" rx="1.5" fill="#9b9893"/><path d="M554.5,77.0 H558.5 V74.5 L563,78.5 L558.5,82.5 V80.0 H554.5 Z" fill="#f4f2ee"/></g><g transform="translate(0,0) scale(1)"><path d="M570.5,68.75 L575.25,64 H591.5 V73.5 H575.25 Z" fill="#dcd9d4" stroke="#aeaba6" stroke-width="1"/><text x="575.75" y="71.3" font-family="Liberation Sans" font-weight="bold" font-size="7.8" fill="#8f8c88">abc</text><rect x="583.5" y="72.3" width="10.5" height="10.5" rx="1.5" fill="#8f8c88"/><path d="M591.25,76.55 A2.8,2.8 0 1 0 588.75,80.35" fill="none" stroke="#f4f2ee" stroke-width="1.4"/><path d="M586.75,81.05 L589.75,79.05 L589.75,82.05 Z" fill="#f4f2ee"/></g><g transform="translate(0,0) scale(1)"><path d="M601.5,68.75 L606.25,64 H622.5 V73.5 H606.25 Z" fill="#dcd9d4" stroke="#aeaba6" stroke-width="1"/><text x="606.75" y="71.3" font-family="Liberation Sans" font-weight="bold" font-size="7.8" fill="#8f8c88">abc</text><rect x="614.5" y="72.3" width="10.5" height="10.5" rx="1.5" fill="#c3c0bb"/><path d="M616.5,80.8 L623.0,74.3" stroke="#f4f2ee" stroke-width="2"/></g><g transform="translate(0,0) scale(1)"><path d="M647,59.5 L669.5,82 H647 Z" fill="#f7a35a" stroke="#d06a20" stroke-width="0.9"/><path d="M651.5,70 L660.5,78.5 H651.5 Z" fill="#d4d0c8" stroke="#d06a20" stroke-width="0.8"/><rect x="661.8" y="60.6" width="5.8" height="17.4" fill="#f6e062" stroke="#b89a20" stroke-width="0.7"/></g><g transform="translate(0,0) scale(1)"><path d="M684,68 L691.5,75.5 Q694,78 696.5,75.5 Q699,73 696.5,70.5 L689,63" fill="none" stroke="#9a9792" stroke-width="4.5"/><rect x="680.5" y="66" width="4" height="4" transform="rotate(45 682.5 68)" fill="#eeece8"/><rect x="688" y="60.5" width="4" height="4" transform="rotate(45 690 62.5)" fill="#eeece8"/></g><g transform="translate(0,0) scale(1)"><path d="M711,70 L718,62 V66.5 Q729,66.5 729,74 Q729,80 722,80 Q726,78 725,74 Q724,71 718,71.5 V76 Z" fill="#bcb9b4"/></g><g transform="translate(0,0) scale(1)"><path d="M760,70 L753,62 V66.5 Q742,66.5 742,74 Q742,80 749,80 Q745,78 746,74 Q747,71 753,71.5 V76 Z" fill="#bcb9b4"/></g><g transform="translate(0,0) scale(1)"><path d="M772,66 Q771,60.5 777,60.5 Q782,61 786,61.5 Q792,61 792.5,65.5 Q793,71 787,71.5 Q782,70 779,71.7 Q772.5,72 772,66 Z" fill="#c3c0bb" stroke="#9f9c97" stroke-width="0.9"/><rect x="783" y="72.3" width="11" height="11" rx="1.5" fill="#8f8c88"/><path d="M791.0,76.8 A2.8,2.8 0 1 0 788.5,80.6" fill="none" stroke="#f4f2ee" stroke-width="1.4"/><path d="M786.5,81.3 L789.5,79.3 L789.5,82.3 Z" fill="#f4f2ee"/></g><g transform="translate(0,0) scale(1)"><circle cx="808.5" cy="67" r="7.5" fill="#d2cfca" stroke="#a9a6a1" stroke-width="0.9"/><path d="M812,67.5 L820,67.5 L824,75 L820,82 L812,82 L808,75 Z" fill="#c6c3be" stroke="#9f9c97" stroke-width="0.9"/><path d="M809,67 Q814,63 816,71 M814,70 L816,73 L818,70" fill="none" stroke="#7f7c78" stroke-width="0.9"/></g><g transform="translate(0,0) scale(1)"><path d="M834,66 Q833,60 840,60 Q845,60.5 849,61 Q855.5,61 855.5,65.5 Q855.5,71 850,71.5 Q845,70.5 842,71.8 Q834.5,72 834,66 Z" fill="#c3c0bb" stroke="#9f9c97" stroke-width="0.9"/><ellipse cx="841" cy="65.5" rx="4.5" ry="2.8" fill="#d8d5d0" stroke="#9f9c97" stroke-width="0.8"/><rect x="845" y="72.3" width="10.5" height="10.5" rx="1.5" fill="#a9a6a1"/><path d="M850.25,73.8 V81.3 M846.8,75.35 L853.7,79.75 M846.8,79.75 L853.7,75.35" stroke="#f4f2ee" stroke-width="1"/><circle cx="850.25" cy="77.55" r="2" fill="#f4f2ee"/><circle cx="850.25" cy="77.55" r="1" fill="#a9a6a1"/></g><g transform="translate(0,0) scale(1)"><path d="M865,66 Q864,60 871,60 Q876,60.5 880,61 Q886.5,61 886.5,65.5 Q886.5,71 881,71.5 Q876,70.5 873,71.8 Q865.5,72 865,66 Z" fill="#c3c0bb" stroke="#9f9c97" stroke-width="0.9"/><path d="M865,80 Q864,76 868,73 Q872,71.5 872.5,74.5 Q873,80 868,82 Q865,82.5 865,80 Z" fill="#b5b2ad" stroke="#9f9c97" stroke-width="0.8"/><rect x="876" y="72.3" width="10.5" height="10.5" rx="1.5" fill="#a9a6a1"/><path d="M881.25,73.8 V81.3 M877.8,75.35 L884.7,79.75 M877.8,79.75 L884.7,75.35" stroke="#f4f2ee" stroke-width="1"/><circle cx="881.25" cy="77.55" r="2" fill="#f4f2ee"/><circle cx="881.25" cy="77.55" r="1" fill="#a9a6a1"/></g><g transform="translate(0,0) scale(1)"><path d="M895,68 Q894,60 902,59.5 Q909,60 914,61 Q918,63 917.5,69 Q917,74 911,74 Q905,75 900,75 Q895,74 895,68 Z" fill="#d2cfca" stroke="#a9a6a1" stroke-width="0.9"/><ellipse cx="902" cy="66" rx="4.8" ry="3.8" fill="#a9a6a1" stroke="#8f8c88" stroke-width="0.6"/><rect x="907" y="72.3" width="10.5" height="10.5" rx="1.5" fill="#a9a6a1"/><path d="M912.25,73.8 V81.3 M908.8,75.35 L915.7,79.75 M908.8,79.75 L915.7,75.35" stroke="#f4f2ee" stroke-width="1"/><circle cx="912.25" cy="77.55" r="2" fill="#f4f2ee"/><circle cx="912.25" cy="77.55" r="1" fill="#a9a6a1"/></g><g transform="translate(0,0) scale(1)"><path d="M926.5,66 Q925.5,60 932.5,60 Q937.5,60.5 941.5,61 Q948,61 948,65.5 Q948,71 942.5,71.5 Q937.5,70.5 934.5,71.8 Q927,72 926.5,66 Z" fill="#c3c0bb" stroke="#9f9c97" stroke-width="0.9"/><ellipse cx="933.5" cy="65.5" rx="4.5" ry="2.8" fill="#d8d5d0" stroke="#9f9c97" stroke-width="0.8"/><rect x="938.5" y="72.3" width="10.5" height="10.5" rx="1.5" fill="#a9a6a1"/><path d="M940.5,74.3 L947.0,80.8 M947.0,74.3 L940.5,80.8" stroke="#f4f2ee" stroke-width="1.5"/></g><g transform="translate(0,0) scale(1)"><path d="M957,66 Q956,60 963,60 Q968,60.5 972,61 Q978.5,61 978.5,65.5 Q978.5,71 973,71.5 Q968,70.5 965,71.8 Q957.5,72 957,66 Z" fill="#c3c0bb" stroke="#9f9c97" stroke-width="0.9"/><path d="M957,80 Q956,76 960,73 Q964,71.5 964.5,74.5 Q965,80 960,82 Q957,82.5 957,80 Z" fill="#b5b2ad" stroke="#9f9c97" stroke-width="0.8"/><rect x="969.5" y="72.3" width="10.5" height="10.5" rx="1.5" fill="#a9a6a1"/><path d="M971.5,74.3 L978.0,80.8 M978.0,74.3 L971.5,80.8" stroke="#f4f2ee" stroke-width="1.5"/></g><g transform="translate(0,0) scale(1)"><path d="M994.5,69.2 L997.5,71.60000000000001 L994.5,74.0" fill="none" stroke="#000" stroke-width="1.6"/><path d="M999.0,69.2 L1002.0,71.60000000000001 L999.0,74.0" fill="none" stroke="#000" stroke-width="1.6"/></g><g transform="translate(0,0) scale(1)"><path d="M15.5,105 L21.5,120 L29,105 H36" fill="none" stroke="#3b5e86" stroke-width="1.2"/><circle cx="15.5" cy="105" r="2" fill="#fff" stroke="#3b5e86" stroke-width="1"/><circle cx="21.5" cy="120" r="2" fill="#fff" stroke="#3b5e86" stroke-width="1"/><circle cx="29" cy="105" r="2" fill="#fff" stroke="#3b5e86" stroke-width="1"/><circle cx="35.5" cy="105" r="2" fill="#fff" stroke="#3b5e86" stroke-width="1"/><rect x="27.2" y="117.2" width="10" height="10" rx="1.5" fill="#4f9a55" stroke="#3f7d44" stroke-width="0.6"/><path d="M32.2,119.0 V125.4 M29.0,122.2 H35.400000000000006" stroke="#fff" stroke-width="1.8"/></g><g transform="translate(0,0) scale(1)"><rect x="13" y="133" width="19.5" height="19.5" fill="#7aa6dc"/><rect x="13" y="133" width="6.5" height="6.5" fill="#1f3d66"/><rect x="26" y="133" width="6.5" height="6.5" fill="#1f3d66"/><rect x="19.5" y="139.5" width="6.5" height="6.5" fill="#1f3d66"/><rect x="13" y="146" width="6.5" height="6.5" fill="#1f3d66"/><rect x="28" y="148" width="9.5" height="9.5" rx="1.5" fill="#4f9a55" stroke="#3f7d44" stroke-width="0.6"/><path d="M32.75,149.8 V155.7 M29.8,152.75 H35.7" stroke="#fff" stroke-width="1.8"/></g><g transform="translate(0,0) scale(1)"><path d="M13.5,186.5 Q18,172 26,166 Q32,162 35.5,163 Q35,168 30,174 Q24,180 15,183" fill="#a8c4e8" stroke="#2c4e80" stroke-width="1"/><path d="M14,186 Q22,174 33,165" fill="none" stroke="#2c4e80" stroke-width="0.8"/><rect x="28" y="178" width="9" height="9" rx="1.5" fill="#4f9a55" stroke="#3f7d44" stroke-width="0.6"/><path d="M32.5,179.8 V185.2 M29.8,182.5 H35.2" stroke="#fff" stroke-width="1.8"/></g><g transform="translate(0,0) scale(1)"><path d="M8.5,198 Q8,192.5 14,192.3 Q19,192 22,194 Q26,195 25.8,200 Q25.5,205 22,205.5 L21.5,209.5 Q20,211 18.5,209.5 L18.5,204 Q15,205 12,203 Q8.5,201.5 8.5,198 Z" fill="#5b8fd1" stroke="#2c4e80" stroke-width="0.9"/><path d="M16.5,195.5 Q20,199 18.5,204 M12.5,196 Q13,200 15.5,201" fill="none" stroke="#2c4e80" stroke-width="0.8"/><rect x="22.3" y="208.1" width="8.7" height="8.7" rx="1.5" fill="#4f9a55" stroke="#3f7d44" stroke-width="0.6"/><path d="M26.65,209.9 V214.99999999999997 M24.1,212.45 H29.2" stroke="#fff" stroke-width="1.8"/><path d="M36,202 H45.3 L40.65,206.7 Z" fill="#000"/></g><g transform="translate(0,0) scale(1)"><circle cx="25" cy="233.5" r="11" fill="#8fb4e4" stroke="#6a94cc" stroke-width="0.8"/><path d="M16,228 H34 M15,234 H35 M16,240 H34 M25,222.5 V244.5 M20,224 Q17,234 20,243 M30,224 Q33,234 30,243" stroke="#dfe9f6" stroke-width="0.9" fill="none"/><path d="M18,229 L22,231 L20,235 Z M26,236 L31,238 L28,241 Z" fill="#2f5b94"/><rect x="28" y="238" width="9" height="9" rx="1.5" fill="#4f9a55" stroke="#3f7d44" stroke-width="0.6"/><path d="M32.5,239.8 V245.2 M29.8,242.5 H35.2" stroke="#fff" stroke-width="1.8"/></g><g transform="translate(0,0) scale(1)"><circle cx="25" cy="263.5" r="11" fill="#3a6aab" stroke="#1f3d66" stroke-width="1"/><path d="M14.5,259 H35.5 M14.5,268 H35.5 M25,252.5 V274.5" stroke="#e8eef6" stroke-width="1.2"/><path d="M19.5,254.5 Q15.5,263.5 19.5,272.5 M30.5,254.5 Q34.5,263.5 30.5,272.5" stroke="#e8eef6" stroke-width="1.2" fill="none"/><path d="M19,260 H31 V267 H19 Z" fill="#8fb4e4"/><rect x="28" y="268" width="9" height="9" rx="1.5" fill="#4f9a55" stroke="#3f7d44" stroke-width="0.6"/><path d="M32.5,269.8 V275.2 M29.8,272.5 H35.2" stroke="#fff" stroke-width="1.8"/></g><g transform="translate(0,0) scale(1)"><circle cx="25" cy="293" r="11" fill="#eaf0f8" stroke="#5b8fd1" stroke-width="1"/><path d="M15,288 H35 M14,294 H36 M15,299 H35 M25,282 V304 M19,283.5 Q15.5,293 19,302.5 M31,283.5 Q34.5,293 31,302.5" stroke="#8fb0dc" stroke-width="0.8" fill="none"/><path d="M18.5,288.5 L23,299.5 L27,288.5 H31" fill="none" stroke="#111" stroke-width="1.1"/><circle cx="18.5" cy="288.5" r="1.5" fill="#fff" stroke="#111" stroke-width="0.8"/><circle cx="27" cy="288.5" r="1.5" fill="#fff" stroke="#111" stroke-width="0.8"/><circle cx="31" cy="288.5" r="1.5" fill="#fff" stroke="#111" stroke-width="0.8"/><circle cx="23" cy="299.5" r="1.5" fill="#fff" stroke="#111" stroke-width="0.8"/><rect x="28" y="298.2" width="9" height="9" rx="1.5" fill="#4f9a55" stroke="#3f7d44" stroke-width="0.6"/><path d="M32.5,300.0 V305.4 M29.8,302.7 H35.2" stroke="#fff" stroke-width="1.8"/></g><g transform="translate(0,0) scale(1)"><circle cx="21" cy="318.5" r="3.5" fill="#4a7ec2"/><path d="M23.5,319 Q26,325 17.5,331" fill="none" stroke="#4a7ec2" stroke-width="2.6"/><rect x="28" y="328" width="9" height="9" rx="1.5" fill="#4f9a55" stroke="#3f7d44" stroke-width="0.6"/><path d="M32.5,329.8 V335.2 M29.8,332.5 H35.2" stroke="#fff" stroke-width="1.8"/></g><g transform="translate(0,0) scale(1)"><rect x="14.5" y="344.5" width="21" height="21" rx="1.5" fill="#9fbfe6" stroke="#5b8fd1" stroke-width="1"/><path d="M17,346.5 L21.5,359 L28,346.5" fill="none" stroke="#2c4e80" stroke-width="1.2"/><circle cx="21.5" cy="359" r="1.8" fill="#fff" stroke="#2c4e80" stroke-width="0.8"/><rect x="27.6" y="357" width="9.5" height="9.5" rx="1.5" fill="#4f9a55" stroke="#3f7d44" stroke-width="0.6"/><path d="M32.35,358.8 V364.7 M29.400000000000002,361.75 H35.300000000000004" stroke="#fff" stroke-width="1.8"/></g><g transform="translate(0,0) scale(1)"><rect x="10" y="377.5" width="19" height="12" fill="#5b8fd1" stroke="#2c4e80" stroke-width="1"/><path d="M13,374.5 V377.5 M16,374.5 V377.5 M19,374.5 V377.5 M22,374.5 V377.5 M25,374.5 V377.5 M13,389.5 V392.5 M16,389.5 V392.5 M19,389.5 V392.5" stroke="#2c4e80" stroke-width="1"/><rect x="21.6" y="387.3" width="9.7" height="9.7" rx="1.5" fill="#d9ad20"/><path d="M26.45,388.8 V395.5 M23,390.5 L30,393.8 M23,393.8 L30,390.5" stroke="#fff" stroke-width="1"/><path d="M35.6,381.9 H45.3 L40.45,386.59999999999997 Z" fill="#000"/></g><g transform="translate(0,0) scale(1)"><rect x="55.5" y="117" width="9" height="11" fill="none" stroke="#9a9792" stroke-width="0.8"/><rect x="58" y="115" width="9" height="11" fill="#f3f3f3" stroke="#8f8c88" stroke-width="0.8"/><path d="M62,121 V114 Q62,112.5 63.5,112.5 Q65,112.5 65,114 V121" fill="none" stroke="#3d6cab" stroke-width="1.1"/><rect x="63" y="122" width="6.5" height="6.5" rx="1" fill="#4f9a55"/><circle cx="66.2" cy="125.2" r="1.8" fill="#fff"/></g><g transform="translate(0,0) scale(1)"><path d="M78,121 Q85,114.5 92.5,121 Q85,127.5 78,121 Z" fill="#e8e6e2" stroke="#aaa" stroke-width="0.8"/><circle cx="84" cy="120.5" r="3.6" fill="#5b8fd1"/><circle cx="84" cy="120" r="1.3" fill="#111"/><path d="M88.5,125.5 H94.0 L91.25,128.5 Z" fill="#000"/></g><g transform="translate(0,0) scale(1)"><path d="M101,114 H114.5 L109,121.5 V128 Q107.8,129.5 106.5,128 V121.5 Z" fill="#5b8fd1" stroke="#3d6cab" stroke-width="0.8"/><rect x="102" y="114" width="11.5" height="2" fill="#f3e040"/></g><g transform="translate(0,0) scale(1)"><path d="M123,119 Q123,117.5 125,117.5 M123.5,120.5 L124.5,123.5" stroke="#8a6aa8" stroke-width="1" fill="none"/><rect x="126.5" y="121" width="3.5" height="3.5" fill="#ddd" stroke="#aaa" stroke-width="0.6"/><path d="M133,117.7 H142.1 L137.55,122.9 Z" fill="#000"/></g><g transform="translate(0,0) scale(1)"><path d="M148,114.5 H162 M149.5,115 V127" stroke="#c9b8d8" stroke-width="0.8"/><rect x="151" y="118" width="3.5" height="3.5" fill="#f5a21a" stroke="#d07000" stroke-width="0.5"/><rect x="151" y="123.5" width="3.5" height="3.5" fill="#f5a21a" stroke="#d07000" stroke-width="0.5"/><path d="M156.3,114 V122 H153.0 L158.5,127.5 L164.0,122 H160.7 V114 Z" fill="#5b8fd1" stroke="#3d6cab" stroke-width="0.7"/></g><g transform="translate(0,0) scale(1)"><path d="M171.2,114.5 H185.2 M172.7,115 V127" stroke="#c9b8d8" stroke-width="0.8"/><rect x="174.2" y="118" width="3.5" height="3.5" fill="#f5a21a" stroke="#d07000" stroke-width="0.5"/><rect x="174.2" y="123.5" width="3.5" height="3.5" fill="#f5a21a" stroke="#d07000" stroke-width="0.5"/><path d="M179.5,127 V119 H176.2 L181.7,113.5 L187.2,119 H183.89999999999998 V127 Z" fill="#5b8fd1" stroke="#3d6cab" stroke-width="0.7"/></g><g transform="translate(0,0) scale(1)"><rect x="194.5" y="114.5" width="11.5" height="11" fill="#f0f0f0" stroke="#8f8c88" stroke-width="1"/><rect x="202" y="122.9" width="6" height="4.9" fill="#e02020"/><path d="M203,125.3 H207" stroke="#fff" stroke-width="1"/></g><g transform="translate(0,0) scale(1)"><path d="M216,119 L219,121.4 L216,123.8" fill="none" stroke="#000" stroke-width="1.6"/><path d="M220.5,119 L223.5,121.4 L220.5,123.8" fill="none" stroke="#000" stroke-width="1.6"/></g><g transform="translate(0,0) scale(1)"><rect x="61" y="156" width="1" height="1" fill="#555"/><rect x="61" y="158" width="1" height="1" fill="#555"/><rect x="61" y="160" width="1" height="1" fill="#555"/><rect x="61" y="162" width="1" height="1" fill="#555"/><rect x="61" y="164" width="1" height="1" fill="#555"/><rect x="61" y="166" width="1" height="1" fill="#555"/><rect x="61" y="168" width="1" height="1" fill="#555"/><rect x="61" y="170" width="1" height="1" fill="#555"/><rect x="61" y="172" width="1" height="1" fill="#555"/><rect x="61" y="174" width="1" height="1" fill="#555"/><rect x="61" y="176" width="1" height="1" fill="#555"/><rect x="61" y="178" width="1" height="1" fill="#555"/><rect x="61" y="180" width="1" height="1" fill="#555"/><rect x="61" y="182" width="1" height="1" fill="#555"/><rect x="61" y="184" width="1" height="1" fill="#555"/><rect x="61" y="186" width="1" height="1" fill="#555"/><rect x="61" y="188" width="1" height="1" fill="#555"/><rect x="61" y="190" width="1" height="1" fill="#555"/><rect x="61" y="192" width="1" height="1" fill="#555"/><rect x="61" y="194" width="1" height="1" fill="#555"/><rect x="61" y="196" width="1" height="1" fill="#555"/><rect x="61" y="198" width="1" height="1" fill="#555"/><rect x="63" y="198" width="1" height="1" fill="#555"/><rect x="65" y="198" width="1" height="1" fill="#555"/><rect x="67" y="198" width="1" height="1" fill="#555"/><rect x="69" y="198" width="1" height="1" fill="#555"/><rect x="71" y="198" width="1" height="1" fill="#555"/><rect x="81" y="158" width="1" height="1" fill="#555"/><rect x="81" y="160" width="1" height="1" fill="#555"/><rect x="81" y="162" width="1" height="1" fill="#555"/><rect x="81" y="164" width="1" height="1" fill="#555"/><rect x="81" y="166" width="1" height="1" fill="#555"/><rect x="81" y="168" width="1" height="1" fill="#555"/><rect x="81" y="170" width="1" height="1" fill="#555"/><rect x="81" y="172" width="1" height="1" fill="#555"/><rect x="81" y="174" width="1" height="1" fill="#555"/><rect x="81" y="176" width="1" height="1" fill="#555"/><rect x="81" y="178" width="1" height="1" fill="#555"/><rect x="81" y="180" width="1" height="1" fill="#555"/><rect x="81" y="182" width="1" height="1" fill="#555"/><rect x="83" y="166" width="1" height="1" fill="#555"/><rect x="83" y="182" width="1" height="1" fill="#555"/><rect x="85" y="166" width="1" height="1" fill="#555"/><rect x="85" y="182" width="1" height="1" fill="#555"/><rect x="87" y="166" width="1" height="1" fill="#555"/><rect x="87" y="182" width="1" height="1" fill="#555"/><rect x="89" y="166" width="1" height="1" fill="#555"/><rect x="89" y="182" width="1" height="1" fill="#555"/><rect x="91" y="166" width="1" height="1" fill="#555"/><rect x="91" y="182" width="1" height="1" fill="#555"/><rect x="66" y="150" width="1" height="1" fill="#555"/><rect x="68" y="150" width="1" height="1" fill="#555"/><rect x="70" y="150" width="1" height="1" fill="#555"/><rect x="72" y="150" width="1" height="1" fill="#555"/><rect x="74" y="150" width="1" height="1" fill="#555"/><rect x="61" y="143" width="1" height="1" fill="#555"/><rect x="57.5" y="146.5" width="8" height="8" fill="#fff" stroke="#808080" stroke-width="1"/><path d="M59.5,150.5 H63.5" stroke="#000" stroke-width="1"/></g><g transform="translate(0,0) scale(1)"><rect x="75.7" y="145.5" width="11" height="11" fill="none" stroke="#fff" stroke-width="1"/><path d="M78.0,150.8 L80.2,153.5 L84.5,147.8" fill="none" stroke="#fff" stroke-width="1.6"/></g><g transform="translate(0,0) scale(1)"><circle cx="100.7" cy="150.3" r="2.3" fill="#b0201a"/></g><g transform="translate(0,0) scale(1)"><circle cx="103.9" cy="165.8" r="4" fill="#e8480e" stroke="#5a1c08" stroke-width="0.8"/></g><g transform="translate(0,0) scale(1)"><rect x="94" y="174.2" width="16" height="16" fill="#7b7bf7"/></g><g transform="translate(0,0) scale(1)"><rect x="75.7" y="193.8" width="11" height="11" fill="#fff" stroke="#000" stroke-width="1"/><path d="M78.0,199.10000000000002 L80.2,201.8 L84.5,196.10000000000002" fill="none" stroke="#000" stroke-width="1.6"/></g><g transform="translate(0,0) scale(1)"><rect x="93.5" y="190.5" width="15.5" height="15.5" fill="#fffec4" stroke="#555" stroke-width="0.8"/></g><g transform="translate(0,0) scale(1)"><path d="M356,533 Q355,531 357,530 L363,531 Q366,533 366,538 L366,542 Q365,547 360,547 Q355,546 354.5,541 Z" fill="#3a3a3a"/><ellipse cx="360.5" cy="541" rx="4" ry="3.5" fill="#e8e8e8"/><circle cx="360.5" cy="541.5" r="1.8" fill="#3a3a3a"/><path d="M357.5,533.5 L362,537" stroke="#e8e8e8" stroke-width="1.2"/><path d="M366,531 L368,529 M367,535 L369,534" stroke="#555" stroke-width="0.8"/></g><g transform="translate(0,0) scale(1)"><path d="M508,535.5 H515 L511.5,540.0 Z" fill="#000"/></g><g transform="translate(0,0) scale(1)"><path d="M529.5,538 V534.5 Q529.5,530.5 533.5,530.5 Q537.5,530.5 537.5,534.5 V538" fill="none" stroke="#999" stroke-width="1.6"/><rect x="527" y="538" width="13" height="9.5" rx="1" fill="#f5d020" stroke="#b89400" stroke-width="0.8"/></g><g transform="translate(0,0) scale(1)"><path d="M709,534 L712.5,531.5 L716,534 Z M709,543 L712.5,545.5 L716,543 Z" fill="#000"/></g><g transform="translate(0,0) scale(1)"><path d="M731.5,538.5 L734.5,542.5 L739.5,535" fill="none" stroke="#000" stroke-width="1.6"/></g><g transform="translate(0,0) scale(1)"><circle cx="817" cy="539.3" r="7.2" fill="#333"/><circle cx="817" cy="539.3" r="5.3" fill="#cfcfcf"/><path d="M811.5,539.3 H822.5 M817,534 V544.6" stroke="#333" stroke-width="1.3"/><ellipse cx="817" cy="539.3" rx="2.8" ry="5.3" fill="none" stroke="#333" stroke-width="1.1"/></g><g transform="translate(0,0) scale(1)"><path d="M963.5,532 Q956,532 956,538 Q956,543.5 962,544 L961,547.5 L966,544 Q971.5,543 971.5,538 Q971.5,532 963.5,532 Z" fill="#6b6b6b"/><circle cx="960" cy="538" r="1.2" fill="#fff"/><circle cx="963.7" cy="538" r="1.2" fill="#fff"/><circle cx="967.4" cy="538" r="1.2" fill="#fff"/></g><g transform="translate(0,0) scale(1)"><path d="M1004,545 L995,554 M1004,548 L998,554 M1004,551 L1001,554" stroke="#808080" stroke-width="1"/><path d="M1004,546 L996,554 M1004,549 L999,554" stroke="#fff" stroke-width="0.8"/></g><g transform="translate(0,0) scale(1)"><path transform="translate(715,537) scale(1.05)" d="M0,0 L0,11 L3,8.5 L5.5,13 L7.5,12 L5.2,7.6 L9,7.4 Z" fill="#000" stroke="#fff" stroke-width="0.9" stroke-linejoin="round"/></g><g transform="translate(0,0) scale(1)"><path d="M202.8,97 V92.8 H208.6 V97.6 H206.5" fill="none" stroke="#000" stroke-width="1.3"/><rect x="202.5" y="92" width="6.5" height="2" fill="#000"/><rect x="200.6" y="96.2" width="5.8" height="5.2" fill="none" stroke="#000" stroke-width="1.3"/><rect x="200" y="95.6" width="7" height="2" fill="#000"/><path d="M215.5,93 L222.5,100 M222.5,93 L215.5,100" stroke="#000" stroke-width="1.9"/></g><g transform="translate(0,0) scale(1)"><path d="M202.8,483 V478.8 H208.6 V483.6 H206.5" fill="none" stroke="#000" stroke-width="1.3"/><rect x="202.5" y="478" width="6.5" height="2" fill="#000"/><rect x="200.6" y="482.2" width="5.8" height="5.2" fill="none" stroke="#000" stroke-width="1.3"/><rect x="200" y="481.6" width="7" height="2" fill="#000"/><path d="M215.5,479 L222.5,486 M222.5,479 L215.5,486" stroke="#000" stroke-width="1.9"/></g></svg>
<div style="position:absolute;left:115.80px;top:142.90px;font-size:13px;line-height:13px;color:#fff;font-weight:700;letter-spacing:1.086px;white-space:nowrap;will-change:transform;"><span style="text-decoration:underline">airports</span></div>
<div style="position:absolute;left:120.50px;top:158.80px;font-size:13px;line-height:13px;color:#000;font-weight:400;letter-spacing:0.729px;white-space:nowrap;will-change:transform;">airports</div>
<div style="position:absolute;left:115.30px;top:175.50px;font-size:13px;line-height:13px;color:#000;font-weight:400;letter-spacing:-0.767px;white-space:nowrap;will-change:transform;">ELEV</div>
<div style="position:absolute;left:114.80px;top:190.80px;font-size:13px;line-height:13px;color:#000;font-weight:700;letter-spacing:1.133px;white-space:nowrap;will-change:transform;">regions</div>
</body></html>
